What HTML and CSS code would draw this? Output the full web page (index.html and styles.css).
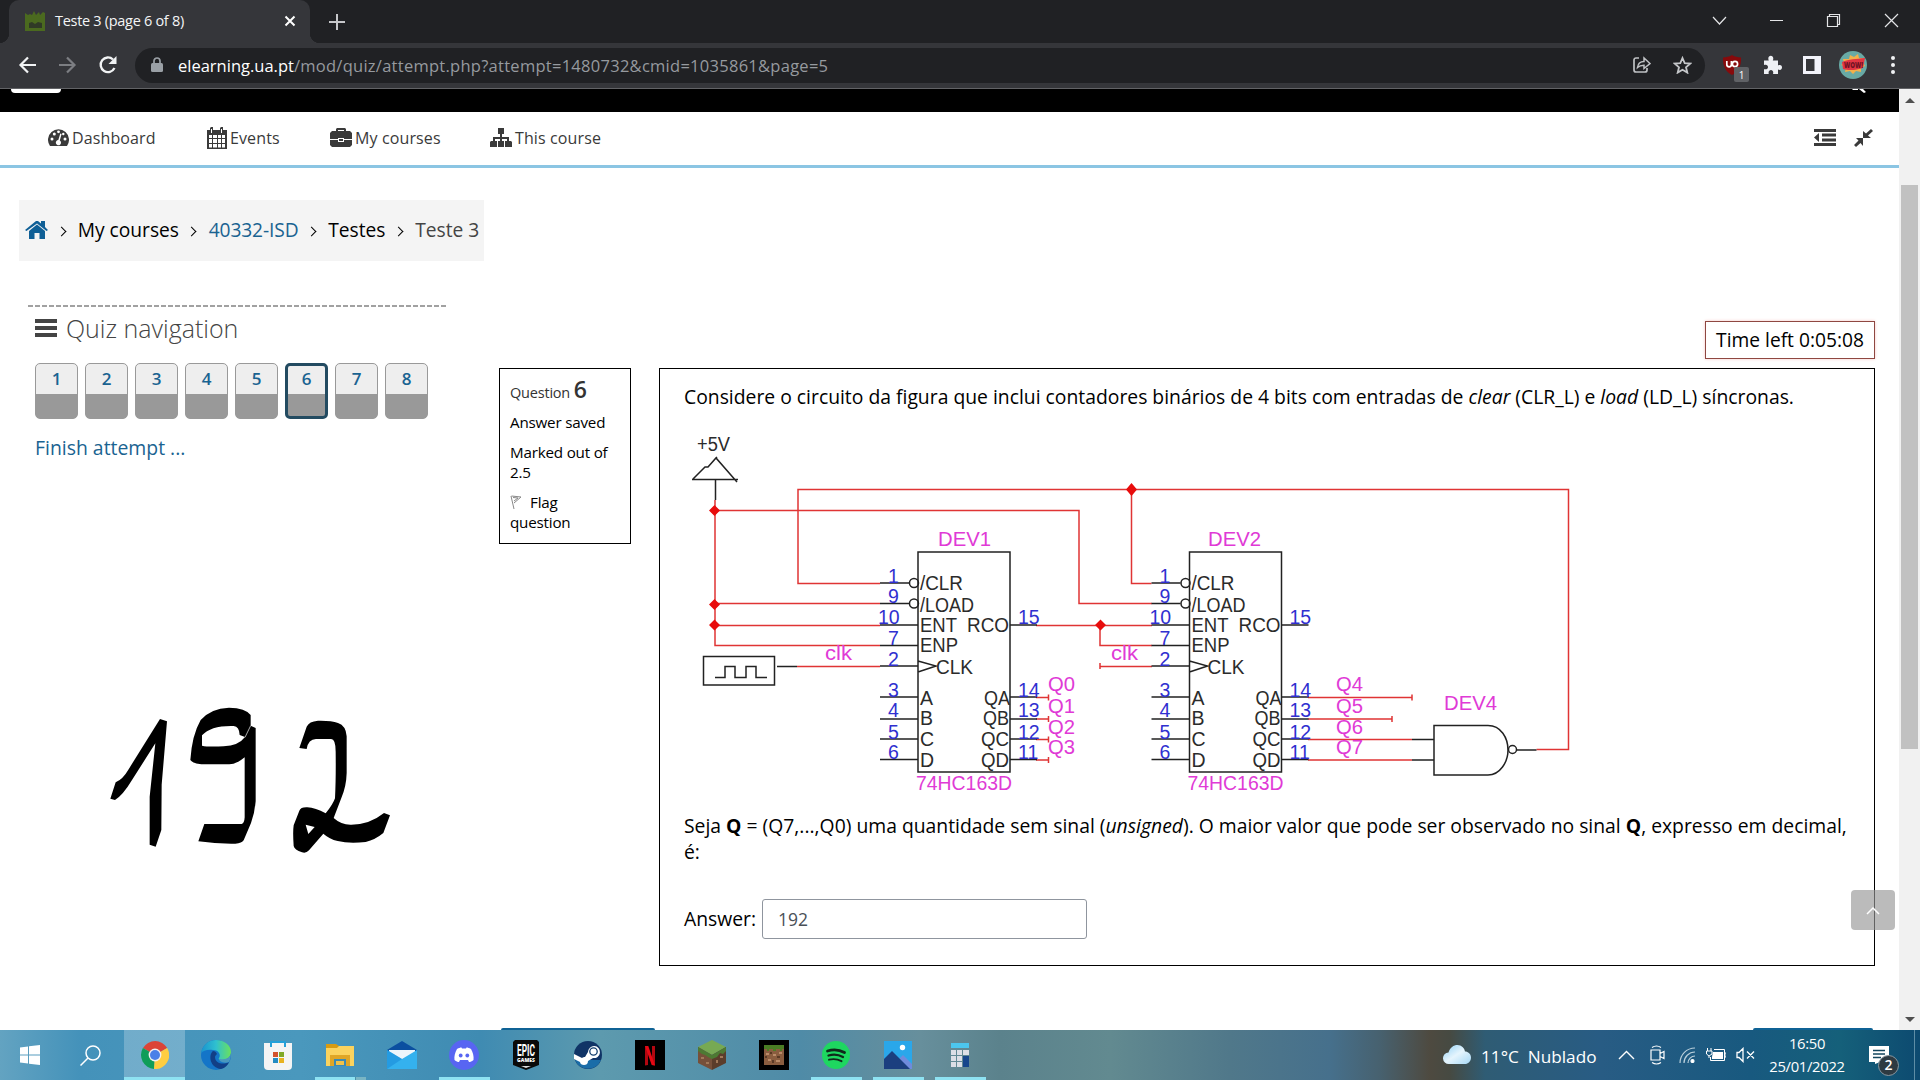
FILE: index.html
```html
<!DOCTYPE html>
<html lang="en">
<head>
<meta charset="utf-8">
<title>Teste 3 (page 6 of 8)</title>
<link rel="stylesheet" href="styles.css">
</head>
<body>
<header class="tabstrip">
  <div class="tab">
    <svg class="favicon" width="21" height="21" viewBox="0 0 21 21"><path fill="#4b6a1f" d="M0 2l3 2 2-1 2 1 2-4 2 4 3-3 1 3 3-3 2 1v18H0z"/><path fill="#303a26" d="M4 12l3-1 3 2 3-2 4 1v5H4z"/></svg>
    <span class="tab-title">Teste 3 (page 6 of 8)</span>
    <svg class="tab-close" width="12" height="12" viewBox="0 0 12 12"><path d="M1.500 1.500l9 9m0-9l-9 9" stroke="#fff" stroke-width="2"/></svg>
  </div>
  <svg class="newtab" width="16" height="16" viewBox="0 0 16 16"><path d="M8 0v16M0 8h16" stroke="#c6c7ca" stroke-width="2"/></svg>
  <svg class="winbtns" width="192" height="20" viewBox="0 0 192 20" fill="none" stroke="#e4e5e7" stroke-width="1.2"><path d="M3 6l6.500 7 6.500-7M60 9.500h13"/><path d="M117.500 5.500h10v10h-10zM119.500 5.500v-2h10v10h-2"/><path d="M175 3l13 13m0-13l-13 13"/></svg>
</header>
<div class="toolbar">
  <svg class="navbtns" width="84" height="22" viewBox="0 0 84 22" fill="none" stroke-width="2.200"><path stroke="#f1f3f4" d="M20 11H4.500M12 3.500L4.500 11l7.500 7.500"/><path stroke="#7c7e82" d="M43 11h15.500M51 3.500l7.500 7.500-7.500 7.500"/></svg>
  <svg class="reload" width="20" height="20" viewBox="0 0 20 20"><path fill="none" stroke="#f1f3f4" stroke-width="2.300" d="M16.500 13A7.300 7.300 0 1 1 15 4.500"/><path fill="#f1f3f4" d="M18.500 1v8h-8z"/></svg>
  <div class="omnibox">
    <svg class="lock" width="12" height="16" viewBox="0 0 12 16"><path d="M3 7V4a3 3 0 0 1 6 0v3" fill="none" stroke="#9aa0a6" stroke-width="1.700"/><rect y="6" width="12" height="9" rx="1.500" fill="#9aa0a6"/></svg>
    <span class="url"><b>elearning.ua.pt</b>/mod/quiz/attempt.php?attempt=1480732&amp;cmid=1035861&amp;page=5</span>
    <svg class="share" width="18" height="18" viewBox="0 0 18 18" fill="none" stroke="#bfc1c4" stroke-width="1.700"><path d="M6 2H3a2 2 0 0 0-2 2v10a2 2 0 0 0 2 2h9a2 2 0 0 0 2-2v-2"/><path stroke-width="1.500" d="M4.500 11.500c.5-4 3-6 6.500-6V2l6 5.500-6 5V9.200c-3 0-5 .8-6.500 2.300z"/></svg>
    <svg class="star" width="19" height="18" viewBox="0 0 19 18"><path fill="none" stroke="#c4c6c9" stroke-width="1.800" d="M9.500 2l2.200 5.100 5.500.5-4.200 3.600 1.300 5.400-4.800-2.900-4.800 2.900L6 11.200 1.800 7.600l5.500-.5z"/></svg>
  </div>
  <div class="ublock">
    <svg width="20" height="22" viewBox="0 0 20 22"><path fill="#870a0c" d="M10 1c3 2 5.500 2 9 2.500C19.500 12 16 18 10 21 4 18 .5 12 1 3.500 4.500 3 7 3 10 1z"/><path fill="none" stroke="#fff" stroke-width="1.700" d="M4.800 7v3.500a2.300 2.300 0 0 0 4.600 0V7"/><circle cx="13" cy="10" r="2.600" fill="none" stroke="#fff" stroke-width="1.700"/></svg>
    <span class="badge">1</span>
  </div>
  <svg class="puzzle" width="19" height="20" viewBox="0 0 19 20"><path fill="#eef0f4" d="M1 5.500h4.800C4.500 2.500 6 .8 7.800.8s3.300 1.700 2 4.700H15v5c3-1.200 4 .6 4 2s-1 3.200-4 2v4.500H10c.8-2.500-.5-4-2-4s-3 1.500-2.200 4H1v-4.800c2.500.6 4-.5 4-2.200S3.500 9 1 10z"/></svg>
  <svg class="side" width="18" height="18" viewBox="0 0 18 18"><path fill="#f2f3fa" fill-rule="evenodd" d="M0 0h18v18H0zM3 3v12h8.500V3z"/></svg>
  <svg class="avatar" width="28" height="28" viewBox="0 0 28 28"><circle cx="14" cy="14" r="14" fill="#68aaa5"/><path fill="#f2b04a" d="M4 8l6 0 1-4 4 2 4-3 1 4 5 0-1 4 2 4-4 2 0 4-5-1-3 3-3-3-5 1 1-5-5-2 3-2z"/><path fill="#e23542" d="M3 11c7-3 14-3 23-4l-2 10c-6 2-14 3-20 1z"/><text x="5" y="16.500" font-family="Open Sans, sans-serif" font-weight="800" font-size="8" fill="#6e1222" textLength="19" lengthAdjust="spacingAndGlyphs">WOW!</text></svg>
  <svg class="dots" width="4" height="18" viewBox="0 0 4 18" fill="#f1f3f4"><circle cx="2" cy="2" r="2"/><circle cx="2" cy="9" r="2"/><circle cx="2" cy="16" r="2"/></svg>
</div>

<div class="viewport">
<main class="page">
  <div class="blackbar">
    <i class="logo-edge"></i>
    <svg class="search-edge" width="14" height="4" viewBox="0 0 14 4"><path d="M0 0h6v1H1zM7 0h4l3 3-2 1z" fill="#fff"/></svg>
  </div>
  <nav class="menu">
    <a class="m1"><svg width="21" height="19" viewBox="0 0 21 19"><path fill="#3a3a3a" d="M2 18A10.500 10.500 0 1 1 19 18z"/><g fill="#fff"><circle cx="4" cy="11" r="1.500"/><circle cx="6.300" cy="6" r="1.500"/><circle cx="10.500" cy="3.800" r="1.400"/><circle cx="15.300" cy="6" r="1.200"/><circle cx="17" cy="11" r="1.500"/><path d="M12.300 5.500l1.300.5-1.800 6.500a2.600 2.600 0 1 1-1.500-.4z"/></g></svg>Dashboard</a>
    <a class="m2"><svg width="20" height="22" viewBox="0 0 20 22"><path fill="#3a3a3a" fill-rule="evenodd" d="M0 3h3V1l1-1h2v3h7V1l1-1h2v3h4v19H0zM2 8v3h3V8zm4 0v3h4V8zm5 0v3h3V8zm4 0v3h3V8zM2 12v4h3v-4zm4 0v4h4v-4zm5 0v4h3v-4zm4 0v4h3v-4zM2 17v3.500h3V17zm4 0v3.500h4V17zm5 0v3.500h3V17zm4 0v3.500h3V17z"/><path fill="#fff" d="M4 2h1v4H4zm10 0h1v4h-1z"/></svg>Events</a>
    <a class="m3"><svg width="22" height="20" viewBox="0 0 22 20"><path fill="#3a3a3a" fill-rule="evenodd" d="M6 3V1l1-1h8l1 1v2h4l2 2v6h-8v-1H8v1H0V5l2-2zm2 0h6V2H8zM0 12h8v2h6v-2h8v5l-2 2H2l-2-2zm9-1h4v2H9z"/></svg>My courses</a>
    <a class="m4"><svg width="22" height="20" viewBox="0 0 22 20"><path fill="#3a3a3a" d="M8 0h6v6h-2v3h7v4h2l1 1v5H15v-6h2v-2h-5v2h2v6H8v-6h2v-2H5v2h2v6H0v-5l1-1h2V9h7V6H8z"/></svg>This course</a>
    <svg class="outdent" width="22" height="17" viewBox="0 0 22 17" fill="#3a3a3a"><path d="M0 0h22v3H0zM8 4.500h14v3H8zM8 9.500h14v3H8zM0 14h22v3H0zM0 8.500L5 4v9z"/></svg>
    <svg class="compress" width="19" height="18" viewBox="0 0 19 18" fill="#3a3a3a"><path d="M9 9h8l-3-2.500 5-4.500-2-2-5 4.500L9 2zM9 9v8l-2.500-3L2 18l-2-2 4.500-4.500L2 9z"/></svg>
  </nav>
  <div class="crumbs">
    <svg width="23" height="19" viewBox="0 0 23 19" fill="#0f5f96"><path d="M0 10L11 1h2l3 2.500V1h4v6l3 3-1.500 1L12 3.500 1.500 11z"/><path d="M4 11l8-6.500 8 6.500v8h-5.500v-6h-5v6H4z"/></svg>
    <span class="sep"></span><span class="c1">My courses</span>
    <span class="sep"></span><span class="c2">40332-ISD</span>
    <span class="sep"></span><span class="c3">Testes</span>
    <span class="sep"></span><span class="c4">Teste 3</span>
  </div>
  <div class="columns">
    <aside class="quiznav">
      <svg class="dash" width="418" height="2" viewBox="0 0 418 2"><path d="M0 1h418" stroke="#444" stroke-width="1.200" stroke-dasharray="5 2"/></svg>
      <h2><svg width="22" height="18" viewBox="0 0 22 18" fill="#444"><path d="M0 0h22v4H0zM0 7h22v4H0zM0 14h22v4H0z"/></svg><span>Quiz navigation</span></h2>
      <div class="qbuttons"><a>1</a><a>2</a><a>3</a><a>4</a><a>5</a><a class="current">6</a><a>7</a><a>8</a></div>
      <a class="finish">Finish attempt ...</a>
    </aside>
    <section class="info">
      <p class="qno">Question <b>6</b></p>
      <p>Answer saved</p>
      <p>Marked out of 2.5</p>
      <p class="flag"><svg width="12" height="14" viewBox="0 0 12 14" fill="none" stroke="#888"><path d="M1 1l3 13M1.500 1l9.500 1-7 6M3 2.500l5 .5-4 3"/></svg>Flag question</p>
    </section>
    <div class="main">
      <div class="timer">Time left 0:05:08</div>
      <section class="question">
        <p class="intro">Considere o circuito da figura que inclui contadores binários de 4 bits com entradas de <em>clear</em> (CLR_L) e <em>load</em> (LD_L) síncronas.</p>
        <svg class="circuit" width="900" height="370" viewBox="684 430 900 370">
          <defs>
            <g id="chip">
              <path class="k" d="M0 0h92v220H0zM-38 31h29M-38 51.500h29M-38 73H0M-38 93.500H0M-38 114H0M-38 145H0M-38 167H0M-38 187H0M-38 207.500H0M92 73h27M92 145h27M92 167h27M92 187h27M92 207.500h27M0 109l18 5-18 6"/>
              <circle class="k" cx="-4" cy="31" r="4.500"/><circle class="k" cx="-4" cy="51.500" r="4.500"/>
              <g class="b">
                <text x="-30" y="31">1</text><text x="-30" y="51">9</text><text x="-40" y="72">10</text><text x="-30" y="93">7</text><text x="-30" y="114">2</text>
                <text x="-30" y="145">3</text><text x="-30" y="165">4</text><text x="-30" y="187">5</text><text x="-30" y="207">6</text>
                <text x="100" y="72">15</text><text x="100" y="145">14</text><text x="100" y="165">13</text><text x="100" y="187">12</text><text x="100" y="207">11</text>
              </g>
              <g class="t">
                <text x="2" y="38" textLength="43" lengthAdjust="spacingAndGlyphs">/CLR</text><text x="2" y="60" textLength="54" lengthAdjust="spacingAndGlyphs">/LOAD</text><text x="2" y="80" textLength="37" lengthAdjust="spacingAndGlyphs">ENT</text><text x="49" y="80" textLength="42" lengthAdjust="spacingAndGlyphs">RCO</text><text x="2" y="100" textLength="38" lengthAdjust="spacingAndGlyphs">ENP</text><text x="18" y="122" textLength="37" lengthAdjust="spacingAndGlyphs">CLK</text>
                <text x="2" y="153">A</text><text x="2" y="173">B</text><text x="2" y="194">C</text><text x="2" y="215">D</text>
                <text x="66" y="153" textLength="26" lengthAdjust="spacingAndGlyphs">QA</text><text x="65" y="173" textLength="26" lengthAdjust="spacingAndGlyphs">QB</text><text x="63" y="194" textLength="28" lengthAdjust="spacingAndGlyphs">QC</text><text x="63" y="215" textLength="28" lengthAdjust="spacingAndGlyphs">QD</text>
              </g>
              <text class="m" x="-2" y="238" textLength="96" lengthAdjust="spacingAndGlyphs">74HC163D</text>
            </g>
          </defs>
          <path class="r" d="M880 583.500h-82V489.500h770.500V749.500h-32M1131.500 489.500V583.500h20M715 500v145.500h165M715 510.500h364V603.500h73M715 603.500h165M715 625.500h165M1036 625.500h116M1100 625.500v20h52M797 666.500h83M1100 666.500h52M1100 663v6M1036 697.500h12.500v-3v6M1036 719h12.500v-3v6M1036 739.500h12.500v-3v6M1036 760h12.500v-3v6M1308 697.500h104v-3v6M1308 719h84v-3v6M1308 739.500h104M1308 760h104"/>
          <path class="dot" d="M1131.500 483l5.500 6.500-5.500 6.500-5.500-6.500zM714.500 505l5.500 5.500-5.500 5.500-5.500-5.500zM714.500 599l5.500 5.500-5.500 5.500-5.500-5.500zM714.500 619.500l5.500 5.500-5.500 5.500-5.500-5.500zM1100.500 619.500l5.500 5.500-5.500 5.500-5.500-5.500z"/>
          <path class="k" d="M692 479.500h46M693 479l12-12h3l8-9 21 24M714 460l3-3M715.500 479.500V500M703.500 656.500h71v28.500h-71zM715 677.500h10v-11h10v11h11v-11h10v11h11M777 666.500h20"/>
          <path class="k" d="M1412 739.500h22M1412 760h22M1488 725.500h-54V775h54c12 0 20-13 20-25s-7-24.500-20-24.500zM1516.500 750h20"/>
          <circle class="k nub" cx="1512.500" cy="749.500" r="4"/>
          <use href="#chip" x="918" y="552"/><use href="#chip" x="1189.500" y="552"/>
          <text class="t" x="697" y="451" textLength="33" lengthAdjust="spacingAndGlyphs">+5V</text>
          <g class="m">
            <text x="938" y="546" textLength="53" lengthAdjust="spacingAndGlyphs">DEV1</text><text x="1208" y="546" textLength="53" lengthAdjust="spacingAndGlyphs">DEV2</text><text x="1444" y="710" textLength="53" lengthAdjust="spacingAndGlyphs">DEV4</text>
            <text x="825" y="660" textLength="27" lengthAdjust="spacingAndGlyphs">clk</text><text x="1111" y="660" textLength="27" lengthAdjust="spacingAndGlyphs">clk</text>
            <text x="1048" y="691" textLength="27" lengthAdjust="spacingAndGlyphs">Q0</text><text x="1048" y="713" textLength="27" lengthAdjust="spacingAndGlyphs">Q1</text><text x="1048" y="734" textLength="27" lengthAdjust="spacingAndGlyphs">Q2</text><text x="1048" y="754" textLength="27" lengthAdjust="spacingAndGlyphs">Q3</text>
            <text x="1336" y="691" textLength="27" lengthAdjust="spacingAndGlyphs">Q4</text><text x="1336" y="713" textLength="27" lengthAdjust="spacingAndGlyphs">Q5</text><text x="1336" y="734" textLength="27" lengthAdjust="spacingAndGlyphs">Q6</text><text x="1336" y="754" textLength="27" lengthAdjust="spacingAndGlyphs">Q7</text>
          </g>
        </svg>
        <p class="ask">Seja <b>Q</b> = (Q7,...,Q0) uma quantidade sem sinal (<em>unsigned</em>). O maior valor que pode ser observado no sinal <b>Q</b>, expresso em decimal,<br>é:</p>
        <div class="answer"><label>Answer:</label><div class="field">192</div></div>
      </section>
    </div>
  </div>
  <div class="formbtns"><i class="prev"></i><i class="next"></i></div>
  <div class="totop"><svg width="14" height="9" viewBox="0 0 14 9"><path d="M1 8l6-6 6 6" fill="none" stroke="#fff" stroke-width="1.500"/></svg></div>
  <svg class="ink" width="340" height="200" viewBox="0 0 1020 600"><path d="M240 117l21 7-16 190-1 136-17 50-18-6V350l17-160-70 110q-27 45-51 60l-14-4 16-49q22-10 38-38z"/><path fill-rule="evenodd" d="M362 120q30-35 85-37 50 1 65 22v32l15 7v220q-3 35-14 65l-22 52q-5 9-25 10-56 1-111-7l18-52h112q8-2 9-20V232q-24 20-46 21h-84q-26-3-33-13 5-75 31-120zM366 166v31q16 4 65 2 45-2 64-28l-16-6q-1-25-18-27-68-2-95 28z"/><path fill="none" stroke="#fff" stroke-width="2" d="M512 137l-17 35"/><path fill-rule="evenodd" d="M658 204l22-64q7-16 34-18 39-1 60 7 24 8 26 40v110q-1 40-16 75l-23 60q22 20 50 20 56 1 101-35l18 7-20 53q-24 20-53 27-50 6-84-3-25-6-43-22l-43 50q-9 10-21 6-23-8-25-19-3-42 0-62l17-44q4-11 24-10 24 1 55 18 22-27 28-45 3-60 2-140 0-40-15-38h-44q-23 0-28 30zM677 434l8 28 19-21z"/></svg>
</main>
<div class="scrollbar"><i class="up"></i><i class="thumb"></i><i class="down"></i></div>
</div>

<footer class="taskbar">
  <div class="cell w60"><svg width="20" height="20" viewBox="0 0 20 20" fill="#fff"><path d="M0 2.500L8 1.500V9.500H0zM9 1.300L20 0V9.500H9zM0 10.500h8v8L0 17.500zM9 10.500h11V20L9 18.700z"/></svg></div>
  <div class="cell w63"><svg width="21" height="21" viewBox="0 0 21 21" fill="none" stroke="#fff" stroke-width="1.500"><circle cx="13" cy="8" r="7"/><path d="M8 13l-7.500 7.500"/></svg></div>
  <div class="cell active run"><svg width="28" height="28" viewBox="0 0 28 28"><path fill="#db4437" d="M14 14L2 7a14 14 0 0 1 24.200 0z"/><path fill="#0f9d58" d="M14 14l-1 14A14 14 0 0 1 1.900 7z"/><path fill="#ffcd40" d="M14 14l12.200-7A14 14 0 0 1 13 28z"/><circle cx="14" cy="14" r="6.400" fill="#f1f1f1"/><circle cx="14" cy="14" r="5" fill="#4a80e8"/></svg></div>
  <div class="cell"><svg width="30" height="30" viewBox="0 0 30 30"><defs><linearGradient id="eg" x2="1"><stop stop-color="#1a93cf"/><stop offset=".5" stop-color="#2fc0d0"/><stop offset="1" stop-color="#6be15c"/></linearGradient></defs><circle cx="15" cy="15" r="15" fill="#1475c8"/><path fill="url(#eg)" d="M0 13C2 4 8 0 15 0c9 0 15 6 15 12 0 5-4 8-9 8-3 0-4-1-3-2 2-3 0-8-6-8-6-1-10 1-12 3z"/><path fill="#123f86" d="M12 11c-5 4-3 17 8 18 4-1 7-4 8-7-5 3-14 2-14-5 0-1 1-2 2-3-1-2-2-3-4-3z"/><path fill="#4b98bd" d="M30 13c0 4-1 7-2 9-3 1-6 1-9-1-1-1-1-2 0-2 6 1 10-1 11-6z"/></svg></div>
  <div class="cell"><svg width="30" height="30" viewBox="0 0 30 30"><path fill="none" stroke="#25a0d8" stroke-width="2" d="M8 6V2h14v4"/><path fill="#f4f4f4" d="M1 6V3h28v23a4 4 0 0 1-4 4H5a4 4 0 0 1-4-4z"/><path fill="none" stroke="#25a0d8" stroke-width="2" d="M8 7V2h14v5"/><path fill="#d2512b" d="M10 12h5v5h-5z"/><path fill="#80a826" d="M16 12h5v5h-5z"/><path fill="#238bc2" d="M10 18h5v5h-5z"/><path fill="#e8b220" d="M16 18h5v5h-5z"/></svg></div>
  <div class="cell some"><svg width="28" height="24" viewBox="0 0 28 24"><path fill="#d79b12" d="M0 1h10l3 2H28v6H0z"/><path fill="#fbd35e" d="M0 5h11l2-2h15v20H0z"/><path fill="#3d8ab2" d="M5 23v-9h18v9z"/><path fill="#e0a626" d="M4 23V12h20v11h-4v-7H8v7z"/><path fill="#f0c24a" d="M10 18h8v4h-8z"/></svg></div>
  <div class="cell"><svg width="30" height="28" viewBox="0 0 30 28"><path fill="#0b4fa0" d="M0 9l15-9 15 9v4H0z"/><path fill="#eef5fb" d="M2 9h26v10H2z"/><path fill="#34b1ee" d="M0 9l15 9 15-9v19H0z"/><path fill="#1788d8" d="M0 28l15-10L0 9z" opacity=".55"/></svg></div>
  <div class="cell run2"><svg width="30" height="30" viewBox="0 0 30 30"><circle cx="15" cy="15" r="15" fill="#5865f2"/><path fill="#fff" d="M8 9c2-1 3-1.500 4.500-1.500l.5 1h4l.5-1C19 7.500 20 8 22 9c2 4 3 7 2.500 11-2 1.500-3 2-4.500 2l-1-2h-8l-1 2c-1.500 0-2.500-.5-4.500-2C5 16 6 13 8 9z"/><circle cx="11.700" cy="15.500" r="1.900" fill="#5865f2"/><circle cx="18.300" cy="15.500" r="1.900" fill="#5865f2"/></svg></div>
  <div class="cell"><svg width="26" height="30" viewBox="0 0 26 30"><path fill="#0a0a0a" d="M2 0h22l2 2v23l-13 5-13-5V2z"/><path fill="#ddd" d="M8 26h10l-5 2z"/><text x="4" y="16" font-family="Roboto, sans-serif" font-weight="700" font-size="17" fill="#fff" textLength="18" lengthAdjust="spacingAndGlyphs">EPIC</text><text x="4" y="22" font-family="Open Sans, sans-serif" font-weight="800" font-size="5" fill="#fff" textLength="18">GAMES</text></svg></div>
  <div class="cell"><svg width="28" height="28" viewBox="0 0 28 28"><circle cx="14" cy="14" r="14" fill="#103466"/><path fill="#1a6da8" d="M1 19a14 14 0 0 0 26 0z"/><path fill="#fff" d="M0 13l8 4c1-1 2-1 3-1l3-5a6 6 0 1 1 5 6l-5 3c0 3-2 4-4 4s-4-1-4-3l-6-3z"/><circle cx="19.500" cy="10.500" r="3.700" fill="#fff" stroke="#15406f" stroke-width="1.300"/></svg></div>
  <div class="cell"><svg width="30" height="30" viewBox="0 0 30 30"><path d="M0 0h30v30H0z"/><path fill="#b20710" d="M10 6h3v19l-3 .5zM17 6h3v19.500l-3-.5z"/><path fill="#e50914" d="M10 6h3.300l6.700 19.500-3.300-.5z"/></svg></div>
  <div class="cell"><svg width="28" height="30" viewBox="0 0 28 30"><path fill="#77a953" d="M14 0l14 7-14 8L0 7z"/><path fill="#76503a" d="M0 7l14 8v15L0 23z"/><path fill="#5b3d2b" d="M28 7l-14 8v15l14-7z"/><path fill="#4d7a33" d="M0 7l14 8 14-8v4l-3 3-3-1-3 4-5 2-4-2-3-2-3-1-4-3z"/><path fill="#a07859" d="M3 17h3v2H3zM8 22h3v2H8zM18 20h2v3h-2zM22 16h3v2h-3z"/></svg></div>
  <div class="cell"><svg width="30" height="30" viewBox="0 0 30 30"><path d="M0 0h30v30H0z"/><path fill="#8a5d3f" d="M5 5h20v20H5z"/><path fill="#4b7d24" d="M5 5h20v4h-2v2h-2V9h-4v2h-3V9h-4v2H8V9H5z"/><path fill="#b98b68" d="M7 13h3v2H7zM14 14h3v2h-3zM20 12h3v2h-3zM9 19h3v2H9zM17 20h4v2h-4z"/><path fill="#5a3a26" d="M11 12h2v2h-2zM18 16h3v2h-3zM6 16h2v2H6zM13 20h2v3h-2z"/></svg></div>
  <div class="cell run2"><svg width="28" height="28" viewBox="0 0 28 28"><circle cx="14" cy="14" r="14" fill="#1ed760"/><path fill="none" stroke="#10291a" stroke-linecap="round" d="M5.500 10c6-2 12-1.300 17 1.500" stroke-width="2.800"/><path fill="none" stroke="#10291a" stroke-linecap="round" d="M6.500 14.500c5-1.500 10-1 14.500 1.500" stroke-width="2.300"/><path fill="none" stroke="#10291a" stroke-linecap="round" d="M7 18.700c4.500-1.200 8.500-.7 12.500 1.500" stroke-width="1.900"/></svg></div>
  <div class="cell run2"><svg width="28" height="28" viewBox="0 0 28 28"><path fill="#2aa7ea" d="M0 0h28v28H0z"/><path fill="#6f8bdc" d="M12 21l7-7 9 9v5H12z"/><path fill="#1b3f7f" d="M0 18l8-8 18 18H0z"/><circle cx="18.500" cy="6.500" r="2.700" fill="#fff"/></svg></div>
  <div class="cell run2"><svg width="18" height="24" viewBox="0 0 18 24"><path fill="#4cc6ee" d="M0 0h18v5H0z"/><path fill="#dcdfe6" d="M0 7h5v5H0zM6 7h5v5H6zM12 7h6v5h-6zM0 13h5v5H0zM6 13h5v5H6zM0 19h5v5H0zM6 19h5v5H6z"/><path fill="#16468c" d="M12 13h6v11h-6z"/></svg></div>
  <div class="tray">
    <svg class="cloud" width="28" height="20" viewBox="0 0 28 20"><defs><linearGradient id="cg" x2="1" y2="1"><stop stop-color="#8fd0f5"/><stop offset=".5" stop-color="#e6f5fd"/><stop offset="1" stop-color="#a5d8f6"/></linearGradient></defs><path fill="url(#cg)" d="M6 19a5.700 5.700 0 0 1-.5-11.500C7 2.500 10.500 0 14.500 0c4 0 7 3 7.500 6.500 3 0 6 2.500 6 6 0 4-3 6.500-6 6.500z"/></svg>
    <span class="weather">11°C&nbsp; Nublado</span>
    <svg class="t1" width="17" height="10" viewBox="0 0 17 10"><path fill="none" stroke="#fff" stroke-width="1.400" d="M1 9l7.500-7.500L16 9"/></svg>
    <svg class="t2" width="15" height="20" viewBox="0 0 15 20" fill="none" stroke="#fff" stroke-width="1.200"><path d="M1 5h9v10H1zM10 8.500l4-2v7l-4-2M2 2.500c3-2 6-2 9 0M2 17.500c3 2 6 2 9 0"/></svg>
    <svg class="t3" width="16" height="16" viewBox="0 0 16 16" fill="none" stroke="#b9cfdb" stroke-width="1.200"><path d="M1 16A15 15 0 0 1 16 1M5 16A11 11 0 0 1 16 5M9 16a7 7 0 0 1 7-7"/><circle cx="13.500" cy="14" r="1.500" fill="#fff" stroke="#fff"/></svg>
    <svg class="t4" width="20" height="14" viewBox="0 0 20 14" fill="#fff"><path d="M7 4h10v7H6V9z"/><path fill="none" stroke="#fff" d="M8 1.500h10.500v11H4.500V9M18.500 5H20v4h-1.500M1.500 0v3M5 0v3M.5 3H6v3L3 8 .5 6zM3 8v2"/></svg>
    <svg class="t5" width="19" height="16" viewBox="0 0 19 16" fill="none" stroke="#fff" stroke-width="1.300"><path d="M1 5.500h2l4-4v13l-4-4H1zM11 4.500l7 7m0-7l-7 7"/></svg>
    <div class="clock"><span>16:50</span><span>25/01/2022</span></div>
    <div class="notif"><svg width="20" height="18" viewBox="0 0 20 18"><path fill="#fff" d="M0 0h20v16h-9l-5 2v-2H0z"/><path stroke="#15475f" stroke-width="1.500" d="M4 4.500h12M4 8h12M4 11.500h8"/></svg><b>2</b></div>
  </div>
</footer>
</body>
</html>
```
FILE: styles.css
```css
* { box-sizing: border-box; }
body { margin: 0; width: 1920px; height: 1080px; overflow: hidden; display: flex; flex-direction: column; font-family: "Open Sans", sans-serif; background: #fff; color: #000; }
p, h2 { margin: 0; }
svg { display: block; flex: none; }

.tabstrip { height: 43px; flex: none; background: #202124; display: flex; align-items: center; padding-left: 9px; }
.tab { width: 301px; height: 43px; background: #35363a; border-radius: 10px 10px 0 0; display: flex; align-items: center; padding: 0 14px 1px 16px; position: relative; }
.tab::before, .tab::after { content: ""; position: absolute; bottom: 0; width: 10px; height: 10px; }
.tab::before { left: -10px; background: radial-gradient(circle at 0 0, #202124 10px, #35363a 10.5px); }
.tab::after { right: -10px; background: radial-gradient(circle at 100% 0, #202124 10px, #35363a 10.5px); }
.tab-title { margin-left: 9px; margin-top: -2px; font-size: 14.500px; letter-spacing: -.3px; color: #f4f5f6; white-space: nowrap; }
.tab-close { margin-left: auto; }
.newtab { margin-left: 19px; }
.winbtns { margin-left: auto; margin-right: 18px; margin-top: -2px; }

.toolbar { height: 46px; flex: none; background: #35363a; border-bottom: 1px solid #626366; display: flex; align-items: center; padding: 0 0 1px 16px; }
.reload { margin-left: -2px; }
.omnibox { margin-left: 17px; width: 1570px; height: 35px; border-radius: 18px; background: #202124; display: flex; align-items: center; padding-left: 16px; }
.url { margin-left: 15px; font-size: 16.500px; color: #969a9f; white-space: nowrap; letter-spacing: .27px; }
.url b { font-weight: 400; color: #fff; letter-spacing: 0; }
.share { margin-left: auto; }
.star { margin: 0 13px 0 22px; }
.ublock { position: relative; margin-left: 17px; }
.badge { position: absolute; left: 12px; top: 13px; width: 15px; height: 15px; border-radius: 2px; background: #606266; color: #fff; font-size: 10px; line-height: 16px; text-align: center; }
.puzzle { margin-left: 21px; }
.side { margin-left: 21px; }
.avatar { margin-left: 18px; }
.dots { margin-left: 24px; }

.viewport { flex: none; height: 941px; display: flex; }
.page { width: 1899px; height: 941px; position: relative; overflow: hidden; display: flex; flex-direction: column; }
.blackbar { height: 23px; flex: none; background: #000; display: flex; justify-content: space-between; padding: 0 33px 0 11px; }
.logo-edge { width: 50px; height: 4px; background: #fff; border-radius: 0 0 6px 6px; }
.menu { height: 56px; flex: none; border-bottom: 3px solid #8bc5e3; display: flex; align-items: center; padding: 0 0 2px 48px; font-size: 16px; letter-spacing: .12px; color: #3a3a3a; }
.menu a { display: flex; align-items: center; gap: 3px; white-space: nowrap; }
.m1 { width: 159px; } .m2 { width: 123px; } .m3 { width: 160px; }
.outdent { margin-left: auto; }
.compress { margin: 0 26px 0 18px; }

.crumbs { margin: 32px 0 0 19px; width: 465px; height: 61px; flex: none; background: #f4f4f4; display: flex; align-items: center; padding: 0 0 3px 6px; font-size: 19.200px; white-space: nowrap; }
.sep { width: 7px; height: 7px; border: solid #000; border-width: 1.500px 1.500px 0 0; transform: rotate(45deg); margin: 4px 13.200px 0 9.500px; flex: none; }
.c2 { color: #1a6391; letter-spacing: -.1px; } .c4 { color: #444; }

.columns { display: flex; height: 705px; flex: none; }
.quiznav { width: 499px; padding: 44px 0 0 28px; }
.quiznav h2 { display: flex; align-items: center; margin: 4px 0 0 7px; height: 34px; gap: 9px; font-weight: 300; font-size: 25px; color: #444; line-height: 32px; }
.qbuttons { display: flex; gap: 7px; margin: 18px 0 0 7px; }
.qbuttons a { width: 43px; height: 56px; border: 1px solid #999; border-radius: 5px; background: linear-gradient(#eee 30px, #999 30px); color: #1a6391; font-weight: 600; font-size: 17px; text-align: center; line-height: 30px; }
.qbuttons .current { border: 3px solid #234b61; background: linear-gradient(#eee 28px, #999 28px); line-height: 26px; }
.finish { display: block; margin: 15px 0 0 7px; font-size: 19.400px; color: #1a6391; line-height: 28px; }
.info { width: 132px; height: 176px; margin-top: 107px; border: 1px solid #000; padding: 5px 10px; font-size: 15.200px; line-height: 20px; letter-spacing: -.2px; }
.info p { margin-bottom: 10px; }
.info .qno { line-height: 30px; margin-bottom: 4px; color: #333; font-size: 14.500px; }
.qno b { font-size: 23px; font-weight: 600; }
.flag svg { display: inline-block; margin-right: 8px; vertical-align: -1px; }
.main { width: 1216px; margin-left: 28px; padding-top: 60px; display: flex; flex-direction: column; align-items: flex-end; }
.timer { width: 170px; height: 38px; border: 1px solid #8f4741; box-shadow: 0 0 3px #f6c9c6; text-align: center; font-size: 19.200px; line-height: 35px; white-space: nowrap; }
.question { margin-top: 9px; width: 1216px; height: 598px; border: 1px solid #000; padding: 15px 24px 0; font-size: 19.330px; line-height: 26px; }
.intro, .ask { white-space: nowrap; }
.circuit { margin-top: 20px; }
.k { fill: none; stroke: #222; stroke-width: 1.500; }
.nub { fill: #fff; }
.r { fill: none; stroke: #e03434; stroke-width: 1.500; }
.dot { fill: #e80c0c; }
.b, .t, .m { font-family: "Liberation Sans", sans-serif; font-size: 19.500px; }
.b { fill: #3030d0; } .t { fill: #2b2b2b; } .m { fill: #e03ad6; font-size: 20.500px; }
.ask { margin-top: 13px; }
.answer { display: flex; align-items: center; margin-top: 34px; }
.answer label { width: 78px; }
.field { width: 325px; height: 40px; border: 1px solid #8f959e; border-radius: 3px; padding-left: 15px; font-size: 17.500px; line-height: 38px; color: #495057; }
.formbtns { margin-top: auto; height: 2px; display: flex; justify-content: space-between; padding: 0 26px 0 501px; }
.formbtns i { height: 2px; background: #0f6295; border-radius: 5px 5px 0 0; }
.prev { width: 154px; } .next { width: 120px; }
.totop { position: absolute; left: 1851px; top: 801px; width: 44px; height: 40px; border-radius: 4px; background: rgba(150, 150, 150, .65); display: flex; align-items: center; justify-content: center; }
.ink { position: absolute; left: 80px; top: 591px; }

.scrollbar { width: 21px; background: #f1f1f1; display: flex; flex-direction: column; align-items: center; }
.scrollbar i { flex: none; }
.up { margin-top: 9px; border: solid transparent; border-width: 0 5px 5px; border-bottom-color: #505050; }
.thumb { margin-top: 82px; width: 17px; height: 564px; background: #c1c1c1; }
.down { margin-top: auto; margin-bottom: 8px; border: solid transparent; border-width: 5px 5px 0; border-top-color: #505050; }

.taskbar { height: 50px; flex: none; display: flex; background: linear-gradient(90deg, #63a3c1 0, #4492ba 80px, #4a98bd 300px, #3f8bb2 480px, #5d9aae 600px, #4f8ba7 800px, #678f9c 920px, #5b828c 1000px, #628a90 1110px, #50788a 1230px, #46708c 1330px, #47616f 1380px, #4e4a40 1430px, #464a42 1450px, #2f5c74 1485px, #285c84 1600px, #18597f 1750px, #15607a 1840px, #0d4a70 1920px); }
.cell { width: 62px; height: 50px; display: flex; align-items: center; justify-content: center; flex: none; position: relative; }
.w60 { width: 60px; } .w63 { width: 63px; padding-right: 3px; }
.active { width: 61px; margin-left: 1px; background: rgba(255, 255, 255, .24); }
.run { box-shadow: inset 0 -3px #8ee2f2; }
.run2::after, .some::after { content: ""; position: absolute; bottom: 0; left: 6px; width: 51px; height: 3px; background: #8ee2f2; }
.some::after { background: linear-gradient(90deg, #8ee2f2 40px, #4a90a8 40px 41px, #79b5c4 41px); }
.tray { margin-left: auto; display: flex; align-items: center; color: #fff; height: 50px; border-right: 1px solid #5e8da5; margin-right: 5px; }
.weather { width: 137px; margin-left: 10px; font-size: 17.200px; line-height: 47px; padding-top: 3px; white-space: nowrap; }
.t1 { margin-right: 15px; } .t2 { margin-right: 14px; } .t3 { margin-right: 11px; } .t4 { margin-right: 10px; }
.clock { width: 104px; display: flex; flex-direction: column; text-align: center; font-size: 14.800px; line-height: 23px; letter-spacing: -.3px; padding-bottom: 1px; }
.notif { position: relative; width: 55px; padding-left: 10px; }
.notif b { position: absolute; left: 19px; top: 9px; width: 21px; height: 21px; border-radius: 50%; border: 1px solid #8a979f; background: #2e3a42; font-size: 14px; line-height: 18px; font-weight: 600; text-align: center; }
```
